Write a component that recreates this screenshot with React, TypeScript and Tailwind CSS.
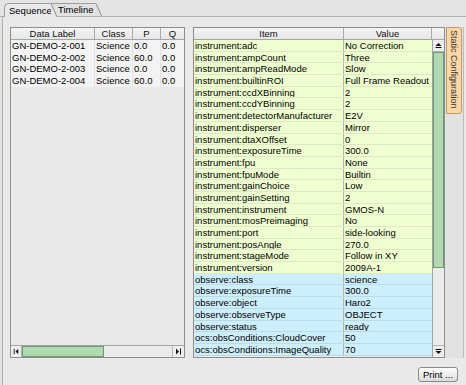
import React from "react";

const instRows: [string, string][] = [
  ["instrument:adc", "No Correction"],
  ["instrument:ampCount", "Three"],
  ["instrument:ampReadMode", "Slow"],
  ["instrument:builtinROI", "Full Frame Readout"],
  ["instrument:ccdXBinning", "2"],
  ["instrument:ccdYBinning", "2"],
  ["instrument:detectorManufacturer", "E2V"],
  ["instrument:disperser", "Mirror"],
  ["instrument:dtaXOffset", "0"],
  ["instrument:exposureTime", "300.0"],
  ["instrument:fpu", "None"],
  ["instrument:fpuMode", "Builtin"],
  ["instrument:gainChoice", "Low"],
  ["instrument:gainSetting", "2"],
  ["instrument:instrument", "GMOS-N"],
  ["instrument:mosPreimaging", "No"],
  ["instrument:port", "side-looking"],
  ["instrument:posAngle", "270.0"],
  ["instrument:stageMode", "Follow in XY"],
  ["instrument:version", "2009A-1"],
];

const obsRows: [string, string][] = [
  ["observe:class", "science"],
  ["observe:exposureTime", "300.0"],
  ["observe:object", "Haro2"],
  ["observe:observeType", "OBJECT"],
  ["observe:status", "ready"],
  ["ocs:obsConditions:CloudCover", "50"],
  ["ocs:obsConditions:ImageQuality", "70"],
];

const seqRows: [string, string, string, string][] = [
  ["GN-DEMO-2-001", "Science", "0.0", "0.0"],
  ["GN-DEMO-2-002", "Science", "60.0", "0.0"],
  ["GN-DEMO-2-003", "Science", "0.0", "0.0"],
  ["GN-DEMO-2-004", "Science", "60.0", "0.0"],
];

function Arrow({ dir }: { dir: "up" | "down" | "left" | "right" }) {
  return (
    <svg width="11" height="11" viewBox="0 0 11 11">
      {dir === "up" && (
        <>
          <polygon points="2.5,6 5.5,3 8.5,6" fill="#111" />
          <rect x="2.5" y="7" width="6" height="1" fill="#111" />
        </>
      )}
      {dir === "down" && (
        <>
          <rect x="2.5" y="3" width="6" height="1" fill="#111" />
          <polygon points="2.5,5 5.5,8 8.5,5" fill="#111" />
        </>
      )}
      {dir === "left" && (
        <>
          <rect x="3" y="2.5" width="1" height="6" fill="#111" />
          <polygon points="8,2.5 5,5.5 8,8.5" fill="#111" />
        </>
      )}
      {dir === "right" && (
        <>
          <polygon points="3,2.5 6,5.5 3,8.5" fill="#111" />
          <rect x="7" y="2.5" width="1" height="6" fill="#111" />
        </>
      )}
    </svg>
  );
}

const thumb =
  "bg-[#b2dab2] bg-[radial-gradient(circle,#8fc08f_35%,transparent_45%)] bg-[length:2px_2px] border border-[#6c9c6c]";

export default function App() {
  return (
    <div className="w-[466px] h-[385px] bg-[#e4e4e4] flex flex-col overflow-hidden font-['Liberation_Sans',Arial,sans-serif] text-[9.5px] text-black">
      {/* tab strip */}
      <div className="h-[17px] flex items-end shrink-0">
        <div className="w-[4px] h-full border-b border-[#b0b0b0]" />
        <div className="h-[14px] w-[47px] border-l border-t border-[#9c9c9c] rounded-tl-[5px] bg-[#e9e9e9] flex items-center pl-[4px] leading-none">
          Sequence
        </div>
        <svg width="6" height="14" viewBox="0 0 6 14" className="block">
          <polygon points="0,0 6,14 0,14" fill="#e9e9e9" />
          <polygon points="0,0 6,14 6,0" fill="#e2e2e2" />
          <line x1="0" y1="0.5" x2="6" y2="14" stroke="#8c8c8c" strokeWidth="1" />
          <line x1="0" y1="0.5" x2="6" y2="0.5" stroke="#9c9c9c" strokeWidth="1" />
        </svg>
        <div className="h-[14px] w-[39px] border-t border-b border-[#9c9c9c] border-b-[#b0b0b0] bg-[#e2e2e2] flex items-center pl-[1px] leading-none">
          Timeline
        </div>
        <svg width="6" height="14" viewBox="0 0 6 14" className="block">
          <polygon points="0,0 6,14 0,14" fill="#e2e2e2" />
          <line x1="0" y1="0.5" x2="6" y2="14" stroke="#8c8c8c" strokeWidth="1" />
          <line x1="0" y1="13.5" x2="6" y2="13.5" stroke="#b0b0b0" strokeWidth="1" />
        </svg>
        <div className="flex-1 h-full border-b border-[#b0b0b0]" />
      </div>

      {/* panel */}
      <div className="flex-1 flex flex-col ml-[2px] border-l border-[#b0b0b0] bg-[#e9e9e9] pl-[7px] pt-[10px]">
        <div className="h-[331px] flex">
          {/* left table */}
          <div className="w-[175px] shrink-0 h-full flex flex-col border border-[#8e8e8e] bg-[#e9e9e9]">
            <div className="h-[12px] flex border-b border-[#a4a4a4] bg-linear-to-b from-[#f4f4f4] to-[#e6e6e6] leading-[11px] text-[#111]">
              <div className="w-[84px] border-r border-[#a8a8a8] text-center">Data Label</div>
              <div className="w-[38px] border-r border-[#a8a8a8] text-center">Class</div>
              <div className="w-[28px] border-r border-[#a8a8a8] text-center">P</div>
              <div className="w-[23px] text-center">Q</div>
            </div>
            {seqRows.map((r, i) => (
              <div key={i} className="h-[11.7px] flex bg-[#f3f3f3] leading-[11.7px] whitespace-nowrap">
                <div className="w-[84px] border-r border-[#e2e2e2] pl-[1px] overflow-hidden">{r[0]}</div>
                <div className="w-[38px] border-r border-[#e2e2e2] pl-[1px] overflow-hidden">{r[1]}</div>
                <div className="w-[28px] border-r border-[#e2e2e2] pl-[1px] overflow-hidden">{r[2]}</div>
                <div className="w-[23px] pl-[1px] overflow-hidden">{r[3]}</div>
              </div>
            ))}
            <div className="flex-1" />
            <div className="h-[12px] flex border-t border-[#a4a4a4] bg-[#ececec]">
              <div className="w-[11px] shrink-0 flex items-center justify-center border-r border-[#b4b4b4] bg-[#eeeeee]">
                <Arrow dir="left" />
              </div>
              <div className={`w-[82px] shrink-0 ${thumb}`} />
              <div className="flex-1 bg-[#ebebeb]" />
              <div className="w-[12px] shrink-0 flex items-center justify-center border-l border-[#b4b4b4] bg-[#eeeeee]">
                <Arrow dir="right" />
              </div>
            </div>
          </div>

          <div className="w-[8px] shrink-0" />

          {/* right table */}
          <div className="w-[252px] shrink-0 h-full flex flex-col border border-[#8e8e8e] bg-[#e9e9e9]">
            <div className="h-[12px] flex border-b border-[#a4a4a4] bg-linear-to-b from-[#f4f4f4] to-[#e6e6e6] leading-[11px] text-[#111] shrink-0">
              <div className="w-[150px] border-r border-[#a8a8a8] text-center">Item</div>
              <div className="w-[88px] border-r border-[#a8a8a8] text-center">Value</div>
              <div className="flex-1" />
            </div>
            <div className="flex-1 flex min-h-0">
              <div className="w-[238px] shrink-0 flex flex-col overflow-hidden">
                {instRows.map((r, i) => (
                  <div key={i} className="h-[11.7px] shrink-0 flex bg-[#efffcf] border-b border-[#dce8c6] leading-[11px] whitespace-nowrap">
                    <div className="w-[150px] border-r border-[#b4b4b4] pl-[1px] overflow-hidden">{r[0]}</div>
                    <div className="flex-1 pl-[1px] overflow-hidden">{r[1]}</div>
                  </div>
                ))}
                {obsRows.map((r, i) => (
                  <div key={i} className="h-[11.7px] shrink-0 flex bg-[#cdeefd] border-b border-[#b9dbea] leading-[11px] whitespace-nowrap">
                    <div className="w-[150px] border-r border-[#b4b4b4] pl-[1px] overflow-hidden">{r[0]}</div>
                    <div className="flex-1 pl-[1px] overflow-hidden">{r[1]}</div>
                  </div>
                ))}
              </div>
              <div className="flex-1 flex flex-col border-l border-[#a4a4a4] bg-[#ebebeb]">
                <div className="h-[12px] shrink-0 flex items-center justify-center border-b border-[#b4b4b4] bg-[#eeeeee]">
                  <Arrow dir="up" />
                </div>
                <div className={`h-[216px] shrink-0 ${thumb}`} />
                <div className="flex-1" />
                <div className="h-[12px] shrink-0 flex items-center justify-center border-t border-[#b4b4b4] bg-[#eeeeee]">
                  <Arrow dir="down" />
                </div>
              </div>
            </div>
          </div>

          {/* right side tab pane */}
          <div className="w-[19px] shrink-0 h-full border-r border-[#bcbcbc] bg-[#e2e2e2] pl-[1px]">
            <div className="w-[16px] h-[87px] bg-[#fdd8a6] border border-[#c49a64] rounded-r-[3px] flex items-center pt-[2px] text-[9px] text-[#333] [writing-mode:vertical-rl] leading-[14px] whitespace-nowrap overflow-hidden">
              Static Configuration
            </div>
          </div>
        </div>

        <div className="flex justify-end pr-[8px] pt-[9px]">
          <div className="w-[40px] h-[15px] border border-[#8a8a8a] rounded-[3px] bg-linear-to-b from-white to-[#dcdcdc] flex items-center justify-center leading-none whitespace-nowrap">
            Print ...
          </div>
        </div>
      </div>
    </div>
  );
}
